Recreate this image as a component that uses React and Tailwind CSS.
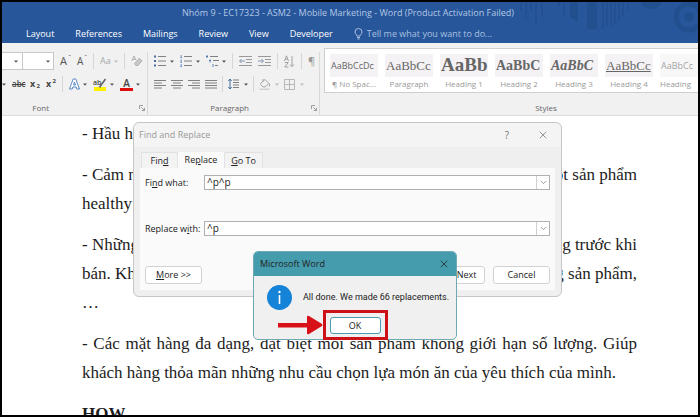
import React from 'react';
import { X, ChevronDown } from 'lucide-react';

const menuTabs = ['Layout', 'References', 'Mailings', 'Review', 'View', 'Developer'];

const styleItems = [
  { name: '¶ No Spac...', sample: 'AaBbCcDc', look: 'font-["Open_Sans"] text-[9px]' },
  { name: 'Paragraph', sample: 'AaBbCc', look: 'font-["Liberation_Serif"] text-[13px]' },
  { name: 'Heading 1', sample: 'AaBb', look: 'font-["Liberation_Serif"] text-[19px] font-bold' },
  { name: 'Heading 2', sample: 'AaBbC', look: 'font-["Liberation_Serif"] text-[14px] font-bold' },
  { name: 'Heading 3', sample: 'AaBbC', look: 'font-["Liberation_Serif"] text-[14px] font-bold italic' },
  { name: 'Heading 4', sample: 'AaBbCc', look: 'font-["Liberation_Serif"] text-[13px] underline' },
  { name: 'Heading', sample: 'AaBbCc', look: 'font-["Open_Sans"] text-[9px] opacity-60' },
];

const Arrow = ({ color = '#555' }) => (
  <svg width="4" height="3" viewBox="0 0 4 3" className="shrink-0">
    <path d="M0 0.5h4L2 2.7z" fill={color} />
  </svg>
);

const Tool = ({ label, className, children }) => (
  <button aria-label={label} className={`flex h-4 shrink-0 items-center justify-between ${className}`}>
    {children}
  </button>
);

const Separator = () => <div className="h-4 w-px shrink-0 bg-[#d6d6d6]" />;

const Lines = ({ rows, color = '#808080' }) => (
  <svg width="12" height="11" viewBox="0 0 12 11">
    {rows.map(([x1, x2], i) => (
      <path key={i} d={`M${x1} ${i * 2.5 + 1.5}H${x2}`} stroke={color} strokeWidth="1" />
    ))}
  </svg>
);

const ListIcon = ({ numbered }) => (
  <svg width="12" height="12" viewBox="0 0 12 12">
    {[1.5, 6, 10.5].map((y) => (
      <g key={y}>
        {numbered ? (
          <path d={`M1.2 ${y - 1.5}v3M0.4 ${y + 1.2}h1.6`} stroke="#4a78b5" strokeWidth="0.8" />
        ) : (
          <rect x="0" y={y - 1} width="2" height="2" fill="#4a6f9f" />
        )}
        <path d={`M4 ${y}h8`} stroke="#808080" />
      </g>
    ))}
  </svg>
);

const MultilevelIcon = () => (
  <svg width="13" height="12" viewBox="0 0 13 12" fill="none">
    <path d="M0 1.5h2M1 0v3M3 5.5h2M4 4.5v3M7 9v3" stroke="#4a78b5" strokeWidth="0.9" />
    <path d="M4 1.5h8M7 5.5h6M9 10.5h3" stroke="#808080" />
  </svg>
);

const IndentIcon = ({ flip }) => (
  <svg width="13" height="10" viewBox="0 0 13 10" fill="none" stroke="#999">
    <path d="M0 0.5h13M7 3.5h6M7 6.5h6M0 9.5h13" />
    <path d={flip ? 'M0 5h5M3.5 3L5.5 5l-2 2' : 'M1 5h5M2.5 3L0.5 5l2 2'} stroke="#8093ab" />
  </svg>
);

const SortIcon = () => (
  <svg width="11" height="13" viewBox="0 0 11 13" fill="none" stroke="#a0a0a0">
    <path d="M0.5 6L2.5 0.8L4.5 6M1.2 4.2h2.6M0.7 7.5h3.6L0.7 12h3.8M8 1v10.5M6 9.5l2 2 2-2" />
  </svg>
);

const SpacingIcon = () => (
  <svg width="11" height="12" viewBox="0 0 11 12" fill="none">
    <path d="M2 1v10M0.3 3L2 1l1.7 2M0.3 9L2 11l1.7-2" stroke="#41719c" />
    <path d="M5 2h6M5 4.5h6M5 7h6M5 9.5h6" stroke="#808080" />
  </svg>
);

const BucketIcon = () => (
  <svg width="12" height="12" viewBox="0 0 12 12" fill="none" stroke="#a8a8a8">
    <path d="M2 5l4-3.5 4 4L6 9H4L1.5 6.5zM4 1v3M10.5 5.5v3" />
    <path d="M0.5 11.2h10" stroke="#c2c2c2" />
  </svg>
);

const BordersIcon = () => (
  <svg width="11" height="11" viewBox="0 0 11 11" fill="none" stroke="#b8b8b8">
    <path d="M0.5 0.5h10v10h-10zM5.5 0.5v10M0.5 5.5h10" />
  </svg>
);

const EraserIcon = () => (
  <svg width="12" height="12" viewBox="0 0 12 12" fill="none" stroke="#b0b0b0">
    <path d="M0.8 6L3 1l2 4M1.6 4.4h3" />
    <path d="M3.5 8.5L8 3.5l3 2.2L7 10.5H4.8z" fill="#c8c8c8" />
  </svg>
);

const HighlightIcon = () => (
  <svg width="14" height="13" viewBox="0 0 14 13" fill="none">
    <rect x="1" y="9" width="12" height="4" fill="#fff200" />
    <path d="M12.5 1L8.5 6.5L6.5 9.5" stroke="#666" strokeWidth="1.6" />
    <text x="0" y="7" fontSize="7" fontFamily="Open Sans" fontWeight="600" fill="#444">ab</text>
  </svg>
);

const Launcher = ({ label }) => (
  <button aria-label={label}>
    <svg width="6" height="6" viewBox="0 0 6 6" fill="none" stroke="#888" strokeWidth="0.8">
      <path d="M0.5 4V0.5H4M2.3 2.3l3 3M5.5 2.8v2.7H2.8" />
    </svg>
  </button>
);

const TitleArt = () => (
  <svg width="185" height="41" viewBox="515 2 185 41" className="absolute top-0 right-0" fill="none" stroke="#224f8e">
    <path d="M523 2v8M528 2v17M533 2v9M538 2v23M544 2v14M561 2v5M566 2v13" strokeWidth="1.5" />
    <path d="M572 2h8v20l-8-5zM589 2h10v27h-10z" fill="#224f8e" stroke="none" />
    <path d="M605 2v26M609 2v24M613 2v24M617 2v22M621 2v18M625 2v14M630 2v8" strokeWidth="1.5" />
    <path d="M643 2a10 7 0 0 0 20 0z" fill="#224f8e" stroke="none" />
    <circle cx="691" cy="17" r="13" strokeWidth="5" />
    <circle cx="691" cy="17" r="5" fill="#224f8e" stroke="none" />
  </svg>
);

const TitleBar = () => (
  <header className="relative overflow-hidden bg-[#27569b] text-white">
    <TitleArt />
    <div className="relative flex h-[22px] items-center justify-center pr-1 text-[9px] text-[#b4c8e4]">
      Nhóm 9 - EC17323 - ASM2 - Mobile Marketing - Word (Product Activation Failed)
    </div>
    <nav className="relative flex h-[19px] items-center gap-[21px] overflow-hidden pl-6 text-[9px] font-medium">
      {menuTabs.map((tab) => (
        <a key={tab} href="#">{tab}</a>
      ))}
      <a href="#" className="flex items-center gap-1 whitespace-nowrap font-normal text-[#a9c0e0]">
        <svg width="9" height="12" viewBox="0 0 9 12" fill="none" stroke="currentColor">
          <path d="M3 8C3 6.5 1 6 1 4a3.500 3.500 0 0 1 7 0c0 2-2 2.500-2 4zM3 9.500h3M3.500 11h2" />
        </svg>
        Tell me what you want to do...
      </a>
    </nav>
  </header>
);

const FontGroup = () => (
  <section className="flex w-[146px] shrink-0 flex-col border-r border-[#d9d9d9]">
    <div className="flex h-[18px] items-center gap-[6px]">
      <div className="flex shrink-0">
        <button aria-label="Font name" className="flex h-[18px] w-[21px] items-center justify-end border-y border-r border-[#c8c8c8] bg-white pr-1">
          <Arrow />
        </button>
        <button aria-label="Font size" className="flex h-[18px] w-[31px] items-center justify-end border-y border-r border-[#c8c8c8] bg-white pr-[3px]">
          <Arrow />
        </button>
      </div>
      <Tool label="Grow font" className="w-[11px] text-[11px] text-[#555]">A<sup className="text-[7px]">ˆ</sup></Tool>
      <Tool label="Shrink font" className="w-[10px] text-[10px] text-[#555]">A<sup className="text-[7px]">ˇ</sup></Tool>
      <Separator />
      <Tool label="Change case" className="w-[18px] text-[9px] text-[#a8a8a8]">Aa<Arrow color="#bbb" /></Tool>
      <Separator />
      <Tool label="Clear formatting" className="w-3"><EraserIcon /></Tool>
    </div>
    <div className="mt-[5px] flex h-[18px] items-center gap-[6px]">
      <Arrow />
      <Tool label="Strikethrough" className="w-[12px] text-[8px] font-semibold text-[#444] line-through">abc</Tool>
      <Tool label="Subscript" className="w-[10px] text-[9px] font-bold text-[#444]">x<sub className="text-[6px]">2</sub></Tool>
      <Tool label="Superscript" className="w-[10px] text-[9px] font-bold text-[#444]">x<sup className="text-[6px]">2</sup></Tool>
      <Separator />
      <Tool label="Text effects" className="w-[18px]">
        <svg width="11" height="12" viewBox="0 0 11 12" fill="#fff" stroke="#5b8ac4">
          <path d="M4.200 1h2.600L10.500 11H7.800L7.200 9H3.800L3.200 11H0.500zM5.500 4L4.500 7h2z" />
        </svg>
        <Arrow />
      </Tool>
      <Tool label="Highlight" className="w-[21px]"><HighlightIcon /><Arrow /></Tool>
      <Tool label="Font color" className="w-[20px]">
        <span className="flex w-[13px] flex-col items-center border-b-[3px] border-[#e00b0b] text-[10px] leading-[10px] font-semibold text-[#444]">A</span>
        <Arrow />
      </Tool>
    </div>
    <div className="mt-2 flex h-[14px] items-center justify-end gap-[90px] pr-[2px] text-[8px] text-[#666]">
      Font<Launcher label="Font settings" />
    </div>
  </section>
);

const ParagraphGroup = () => (
  <section className="flex w-[172px] shrink-0 flex-col border-r border-[#d9d9d9] pl-[6px]">
    <div className="flex h-[18px] items-center gap-[6px]">
      <Tool label="Bullets" className="w-5"><ListIcon /><Arrow /></Tool>
      <Tool label="Numbering" className="w-5"><ListIcon numbered /><Arrow /></Tool>
      <Tool label="Multilevel list" className="w-5"><MultilevelIcon /><Arrow /></Tool>
      <Separator />
      <Tool label="Decrease indent" className="w-[13px]"><IndentIcon /></Tool>
      <Tool label="Increase indent" className="w-[13px]"><IndentIcon flip /></Tool>
      <Separator />
      <Tool label="Sort" className="w-[11px]"><SortIcon /></Tool>
      <Separator />
      <Tool label="Show marks" className="w-2 text-[11px] text-[#999]">¶</Tool>
    </div>
    <div className="mt-[5px] flex h-[18px] items-center gap-[5px]">
      <Tool label="Align left" className="w-3"><Lines rows={[[0, 12], [0, 8], [0, 12], [0, 8]]} /></Tool>
      <Tool label="Center" className="w-3"><Lines rows={[[0, 12], [2, 10], [0, 12], [2, 10]]} /></Tool>
      <Tool label="Align right" className="w-3"><Lines rows={[[0, 12], [4, 12], [0, 12], [4, 12]]} /></Tool>
      <Tool label="Justify" className="w-3"><Lines rows={[[0, 12], [0, 12], [0, 12], [0, 12]]} /></Tool>
      <Separator />
      <Tool label="Line spacing" className="w-5"><SpacingIcon /><Arrow /></Tool>
      <Separator />
      <Tool label="Shading" className="w-5"><BucketIcon /><Arrow color="#bbb" /></Tool>
      <Tool label="Borders" className="w-5"><BordersIcon /><Arrow color="#bbb" /></Tool>
    </div>
    <div className="mt-2 flex h-[14px] items-center justify-end gap-[62px] pr-[2px] text-[8px] text-[#666]">
      Paragraph<Launcher label="Paragraph settings" />
    </div>
  </section>
);

const StylesGroup = () => (
  <section className="flex min-w-0 flex-1 flex-col pl-1">
    <div className="-mt-1 flex h-[45px] gap-[7px] overflow-hidden border border-r-0 border-[#cfcfcf] bg-white pt-[5px] pl-[5px]">
      {styleItems.map((item) => (
        <button key={item.name} className="flex w-12 min-w-[38px] shrink-0 flex-col items-center last:w-auto last:flex-1 last:shrink last:items-start">
          <span className={`flex h-[23px] w-full items-center bg-[#f5f2f5] pl-px text-[#666] ${item.look}`}>
            {item.sample}
          </span>
          <span className="mt-px text-[8px] leading-[12px] whitespace-nowrap text-[#999]">{item.name}</span>
        </button>
      ))}
    </div>
    <div className="mt-2 flex h-[14px] items-center justify-center pl-[70px] text-[8px] text-[#666]">Styles</div>
  </section>
);

const Split = ({ left, right }) => (
  <span className="flex justify-between">
    <span>{left}</span>
    <span>{right}</span>
  </span>
);

const Document = () => (
  <main className="flex flex-col gap-3 pt-[3px] pr-[61px] pl-20 font-['Liberation_Serif',serif] text-[17px] leading-[29px] text-[#1c1c1c]">
    <p>- Hầu h</p>
    <p>
      <Split left="- Cảm n" right="ột sản phẩm" />
      healthy
    </p>
    <p>
      <Split left="- Những" right="ng trước khi" />
      <Split left="bán. Kh" right="g sản phẩm," />
      …
    </p>
    <p className="text-justify">
      - Các mặt hàng đa dạng, đặt biệt mỗi sản phẩm không giới hạn số lượng. Giúp khách hàng
      thỏa mãn những nhu cầu chọn lựa món ăn của yêu thích của mình.
    </p>
    <h2 className="font-bold">HOW</h2>
  </main>
);

const ComboField = ({ id, label, value }) => (
  <div className="flex h-[15px] items-center">
    <label htmlFor={id} className="w-[59px] shrink-0">{label}</label>
    <div className="flex h-[15px] flex-1 border border-[#b0b0b0] bg-white">
      <input id={id} defaultValue={value} className="w-full min-w-0 flex-1 bg-transparent pl-[2px] text-[10px] leading-[13px] outline-none" />
      <button aria-label="Show history" className="flex w-[13px] items-center justify-center border-l border-[#d0d0d0] text-[#777]">
        <ChevronDown size={9} />
      </button>
    </div>
  </div>
);

const DialogButton = ({ children }) => (
  <button className="h-[18px] w-[57px] rounded-[3px] border border-[#d2d2d2] bg-white whitespace-nowrap">{children}</button>
);

const FindReplaceDialog = () => (
  <div role="dialog" aria-label="Find and Replace" className="absolute top-[120px] left-[131px] w-[429px] rounded-md border border-[#c6c6c6] bg-[#efefef] px-[6px] pb-[6px] text-[9px] text-[#222]">
    <div className="-mx-[6px] flex h-6 items-center rounded-t-md bg-[#f4f4f4] pr-3 pl-[5px] text-[#999]">
      <span className="flex-1">Find and Replace</span>
      <button aria-label="Help" className="mr-7 text-[10px] text-[#777]">?</button>
      <button aria-label="Close"><X size={12} strokeWidth={1.5} className="text-[#777]" /></button>
    </div>
    <div className="mt-[5px] flex h-4 items-stretch pl-px">
      <button className="w-[37px] border border-b-0 border-[#e2e2e2] bg-[#f3f3f3]">Fin<u>d</u></button>
      <button className="w-[46px] bg-[#fafafa]">Re<u>p</u>lace</button>
      <button className="w-[39px] border border-b-0 border-[#e2e2e2] bg-[#f3f3f3]"><u>G</u>o To</button>
    </div>
    <div className="bg-[#fafafa] px-[5px] pt-[7px] pb-[6px]">
      <ComboField id="find" label={<>Fi<u>n</u>d what:</>} value="^p^p" />
      <div className="h-[31px]" />
      <ComboField id="replace" label={<>Replace w<u>i</u>th:</>} value="^p" />
      <div className="mt-[30px] flex justify-end gap-2">
        <div className="flex-1"><DialogButton><u>M</u>ore &gt;&gt;</DialogButton></div>
        <DialogButton><u>F</u>ind Next</DialogButton>
        <DialogButton>Cancel</DialogButton>
      </div>
    </div>
  </div>
);

const MessageDialog = () => (
  <div role="alertdialog" aria-label="Microsoft Word" className="absolute top-[249px] left-[251px] w-[204px] overflow-hidden rounded-[5px] border border-[#6fa9b6] bg-[#f0f0f0] text-[9px] text-[#222]">
    <div className="flex h-6 items-center justify-between bg-[#459cad] pr-[6px] pl-[6px]">
      <span>Microsoft Word</span>
      <button aria-label="Close"><X size={12} strokeWidth={1.5} /></button>
    </div>
    <div className="flex items-center gap-[11px] pt-[9px] pl-[13px] whitespace-nowrap">
      <svg width="25" height="25" viewBox="0 0 25 25" className="shrink-0">
        <circle cx="12.500" cy="12.500" r="12.500" fill="#1583d8" />
        <circle cx="12.500" cy="7" r="1.200" fill="#fff" />
        <path d="M12.500 10v9" stroke="#fff" strokeWidth="1.600" />
      </svg>
      <span className="font-['Roboto',sans-serif]">All done. We made 66 replacements.</span>
    </div>
    <div className="flex justify-center pt-[7px] pb-[5px]">
      <button className="h-[17px] w-[51px] rounded-[3px] border border-[#4a9bb0] bg-white">OK</button>
    </div>
  </div>
);

// Red arrow and frame that point at the OK button
const Callout = () => (
  <div className="pointer-events-none absolute top-[308px] left-[275px] flex items-center">
    <svg width="46" height="20" viewBox="0 0 46 20">
      <path d="M1 8h29V2Q30 0 32 1L45 9Q46 10 45 11L32 19Q30 20 30 18V12.500H1z" fill="#d81118" />
    </svg>
    <div className="h-[30px] w-[65px] border-[3px] border-[#cc1119]" />
  </div>
);

const App = () => (
  <div className="relative h-screen overflow-hidden border-2 border-black bg-white font-['Open_Sans',sans-serif]">
    <TitleBar />
    <div className="flex border-b border-[#dcdcdc] bg-[#f1f1f1] pt-[9px]">
      <FontGroup />
      <ParagraphGroup />
      <StylesGroup />
    </div>
    <Document />
    <FindReplaceDialog />
    <MessageDialog />
    <Callout />
  </div>
);

export default App;
